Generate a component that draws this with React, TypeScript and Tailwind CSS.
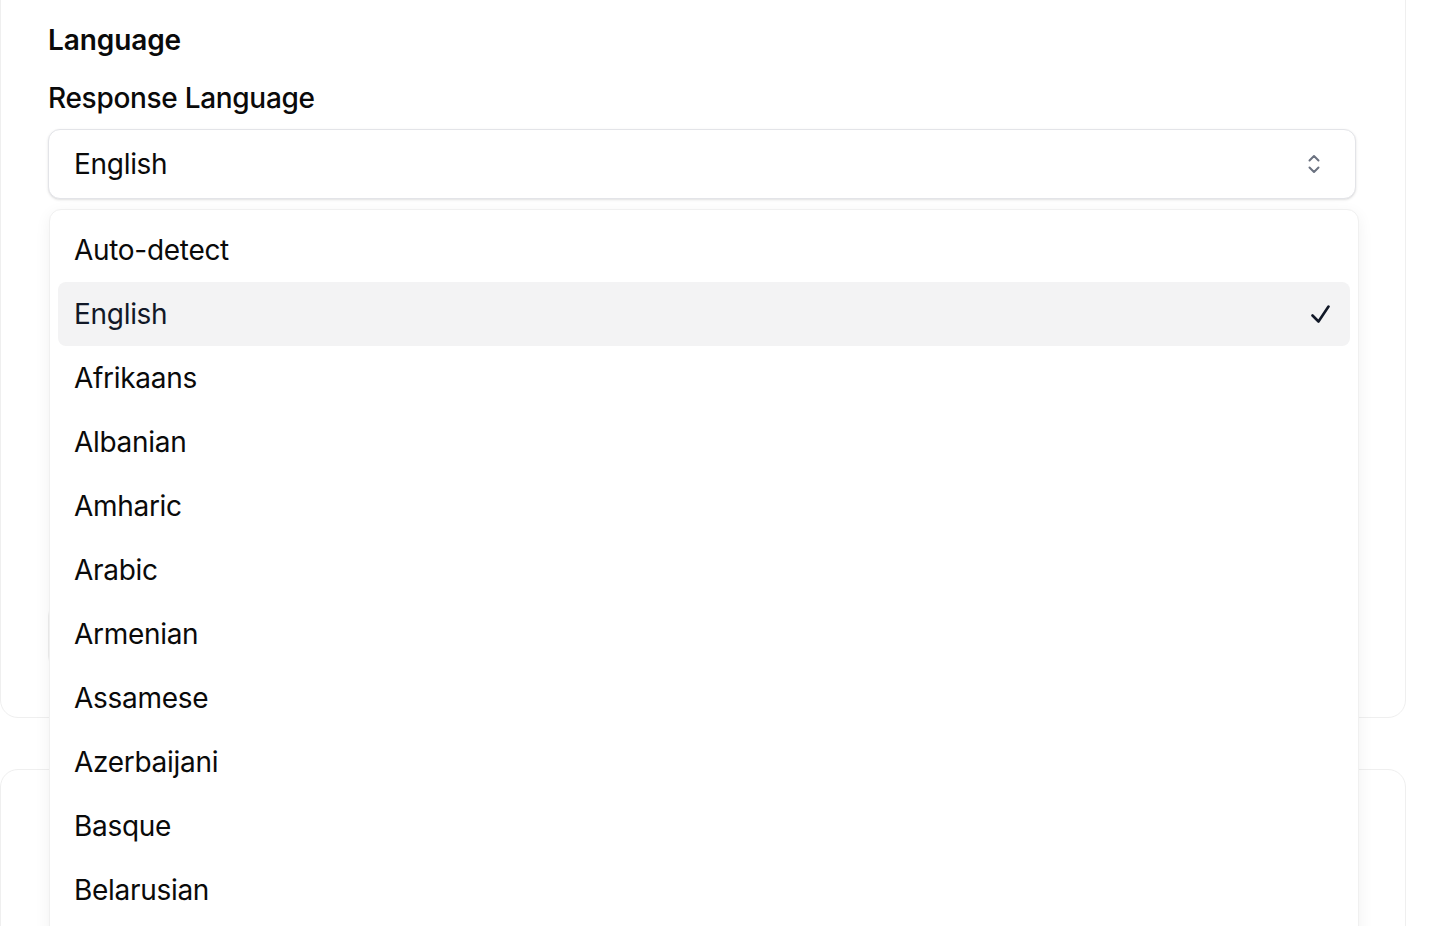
import React from 'react';

const languages = [
  'Auto-detect',
  'English',
  'Afrikaans',
  'Albanian',
  'Amharic',
  'Arabic',
  'Armenian',
  'Assamese',
  'Azerbaijani',
  'Basque',
  'Belarusian',
];

const ChevronsUpDown: React.FC = () => (
  <svg width="14" height="24" viewBox="0 0 14 24" fill="none" stroke="#6b7280" strokeWidth={2} strokeLinecap="round" strokeLinejoin="round">
    <path d="M2.5 8.5 7 4l4.5 4.5" />
    <path d="M2.5 15.5 7 20l4.5-4.5" />
  </svg>
);

const CheckMark: React.FC = () => (
  <svg width="20" height="20" viewBox="0 0 20 20" fill="none" stroke="#111827" strokeWidth={2.6} strokeLinecap="round" strokeLinejoin="round">
    <path d="M2.5 11.5 8.5 17.5 18.5 2.5" />
  </svg>
);

const App: React.FC = () => {
  const selected = 'English';

  return (
    <div className="relative h-[926px] w-[1446px] overflow-hidden bg-white font-['Inter','Noto_Sans',sans-serif] text-[#0a0a0a]">
      <div className="relative -mt-[30px] w-[1406px] rounded-[18px] border border-[#efefef] pt-[49px] pl-[47px] pr-[49px] pb-[49px]">
        <h2 className="text-[28px] leading-[40px] font-semibold tracking-[-0.1px]">Language</h2>
        <div className="mt-[18px] text-[28px] leading-[40px] font-medium tracking-[-0.3px]">Response Language</div>

        <div className="mt-[11px] flex h-[70px] items-center justify-between rounded-[12px] border border-[#e3e4e8] bg-white pl-[25px] pr-[34px] shadow-sm">
          <span className="text-[28px] leading-[40px] tracking-[-0.3px]">English</span>
          <ChevronsUpDown />
        </div>

        <div className="mt-[405px] h-[64px] rounded-[12px] border border-[#eeeeee]" />

        <div className="absolute left-[48px] top-[238px] z-10 w-[1310px] rounded-[12px] border border-[#f0f0f0] bg-white p-[8px] pb-[40px] shadow-[0_4px_16px_rgba(0,0,0,0.06)]">
          {languages.map((lang) => {
            const active = lang === selected;
            return (
              <div
                key={lang}
                className={`flex h-[64px] items-center justify-between rounded-[8px] pl-[16px] pr-[20px] ${
                  active ? 'bg-[#f3f3f4] text-[#111827]' : 'text-[#0a0a0a]'
                }`}
              >
                <span className="text-[28px] leading-[40px] tracking-[-0.3px]">{lang}</span>
                {active && <CheckMark />}
              </div>
            );
          })}
        </div>
      </div>

      <div className="mt-[51px] h-[400px] w-[1406px] rounded-[18px] border border-[#efefef]" />
    </div>
  );
};

export default App;
